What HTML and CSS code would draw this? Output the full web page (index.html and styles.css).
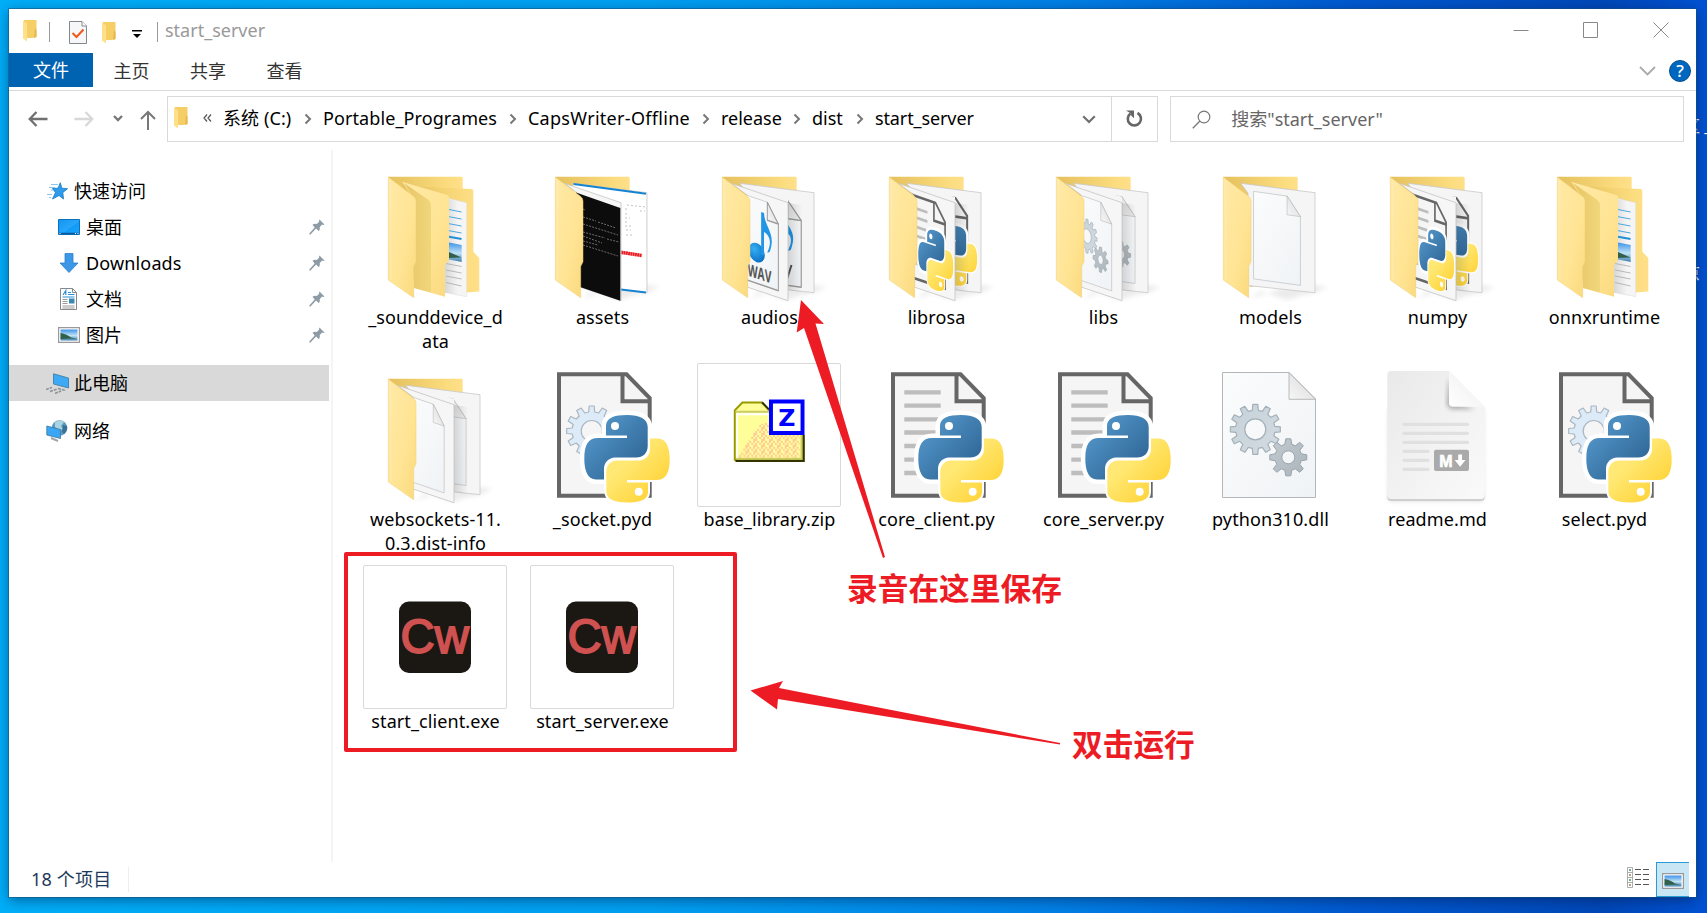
FILE: index.html
```html
<!DOCTYPE html>
<html lang="zh-CN">
<head>
<meta charset="utf-8">
<title>start_server</title>
<link rel="stylesheet" href="styles.css">
</head>
<body>
<svg class="defs" width="0" height="0" aria-hidden="true">
  <defs>
    <linearGradient id="gCover" x1="0" y1="0" x2="1" y2="1"><stop offset="0" stop-color="#ffe9a6"/><stop offset=".6" stop-color="#ffe494"/><stop offset="1" stop-color="#fbd97c"/></linearGradient>
    <linearGradient id="gBack" x1="0" y1="0" x2="1" y2="0"><stop offset="0" stop-color="#e5c05d"/><stop offset=".8" stop-color="#fbdc7e"/><stop offset="1" stop-color="#ffe08a"/></linearGradient>
    <linearGradient id="gInner" x1="0" y1="0" x2="1" y2="0"><stop offset="0" stop-color="#e6c665"/><stop offset="1" stop-color="#f1d67c"/></linearGradient>
    <linearGradient id="gShade" x1="0" y1="0" x2="1" y2="0"><stop offset="0" stop-color="#000" stop-opacity=".14"/><stop offset="1" stop-color="#000" stop-opacity="0"/></linearGradient>
    <linearGradient id="gBlue" x1="0" y1="0" x2="1" y2="1"><stop offset="0" stop-color="#5a9fd4"/><stop offset="1" stop-color="#275c8a"/></linearGradient>
    <linearGradient id="gYel" x1="0" y1="0" x2="1" y2="1"><stop offset=".35" stop-color="#ffe873"/><stop offset=".8" stop-color="#ffd43b"/></linearGradient>
    <linearGradient id="gDoc" x1="0" y1="0" x2="1" y2="1"><stop offset="0" stop-color="#fbfcfc"/><stop offset="1" stop-color="#f0f3f6"/></linearGradient>
    <linearGradient id="gFold" x1="0" y1="1" x2="1" y2="0"><stop offset="0" stop-color="#f6f6f6"/><stop offset="1" stop-color="#d8d8d8"/></linearGradient>
    <linearGradient id="gGear" x1="0" y1="0" x2="1" y2="1"><stop offset="0" stop-color="#c6d1d9"/><stop offset="1" stop-color="#d3dbe1"/></linearGradient>
    <linearGradient id="gGear2" x1="0" y1="0" x2="1" y2="1"><stop offset="0" stop-color="#c3cbd0"/><stop offset="1" stop-color="#aab4ba"/></linearGradient>
    <linearGradient id="gMd" x1="0" y1="0" x2="1" y2="1"><stop offset="0" stop-color="#e9e9e9"/><stop offset="1" stop-color="#fafafa"/></linearGradient>
    <linearGradient id="gMdFold" x1="0" y1="1" x2=".6" y2=".4"><stop offset="0" stop-color="#ffffff"/><stop offset="1" stop-color="#f4f4f4"/></linearGradient>
    <linearGradient id="gSky" x1="0" y1="0" x2="0" y2="1"><stop offset="0" stop-color="#3f93e6"/><stop offset=".55" stop-color="#bfe2f7"/><stop offset="1" stop-color="#3c7fae"/></linearGradient>
    <linearGradient id="gScreen" x1="0" y1="0" x2="1" y2="1"><stop offset="0" stop-color="#1296ee"/><stop offset=".55" stop-color="#27a6fb"/><stop offset=".56" stop-color="#0f9bf7"/><stop offset="1" stop-color="#1ba4ff"/></linearGradient>
    <radialGradient id="gNote" cx=".35" cy=".35" r=".8"><stop offset="0" stop-color="#35b0f5"/><stop offset="1" stop-color="#0568bd"/></radialGradient>
    <filter id="blur3"><feGaussianBlur stdDeviation="2.4"/></filter>
    <pattern id="dither" width="8" height="6" patternUnits="userSpaceOnUse"><path fill="#ffcc99" d="M0 0h2v2h-2zM4 0h2v2h-2zM2 2h2v2h-2zM6 2h2v2h-2zM0 4h4v2h-4z"/></pattern>
    <clipPath id="cFront"><path d="M34.300 22.300L91 41.700V139.700L50 126V34z"/></clipPath>
    <clipPath id="cRear"><path d="M42.700 22.300L117 31.700V131.700L91 129V36z"/></clipPath>
  </defs>

  <symbol id="gear12" viewBox="-26 -26 52 52">
    <path fill-rule="evenodd" stroke-width="1.200" stroke-linejoin="round" d="M-3-19L-2.500-25H2.500L3-19L7-18L10.500-23L15-20.500L12.500-15L15.500-12L21-14.500L23.500-10L18.500-6.500L19.500-3L25-2.500V2.500L19.500 3L18.500 6.500L23.500 10L21 14.500L15.500 12L12.500 15L15 20.500L10.500 23L7 18L3 19L2.500 25H-2.500L-3 19L-7 18L-10.500 23L-15 20.500L-12.500 15L-15.500 12L-21 14.500L-23.500 10L-18.500 6.500L-19.500 3L-25 2.500V-2.500L-19.500-3L-18.500-6.500L-23.500-10L-21-14.500L-15.500-12L-12.500-15L-15-20.500L-10.500-23L-7-18zM10.500 0A10.500 10.500 0 1 0-10.500 0A10.500 10.500 0 1 0 10.500 0z"/>
  </symbol>
  <symbol id="gear8" viewBox="-20 -20 40 40">
    <path fill-rule="evenodd" stroke-width="1" stroke-linejoin="round" d="M-3.500-13L-2.500-18.500H2.500L3.500-13L7-11.500L11.500-15L15-11.500L11.500-7L13-3.500L18.500-2.500V2.500L13 3.500L11.500 7L15 11.500L11.500 15L7 11.500L3.500 13L2.500 18.500H-2.500L-3.500 13L-7 11.500L-11.500 15L-15 11.500L-11.500 7L-13 3.500L-18.500 2.500V-2.500L-13-3.500L-11.500-7L-15-11.500L-11.500-15L-7-11.500zM6.500 0A6.500 6.500 0 1 0-6.500 0A6.500 6.500 0 1 0 6.500 0z"/>
  </symbol>

  <symbol id="snake" viewBox="0 0 144 144">
    <g fill="#fff" stroke="#fff" stroke-width="9" stroke-linejoin="round">
      <path d="M76 63C76 55 84 52 97 52C110 52 117.700 56 117.700 64V83C117.700 90 113 94.500 106 94.500H85C79 95 74 99 74 106V116.500H66C58 116.500 54.300 108 54.300 96C54.300 82 58 75 68 75H97V72.500H76z"/>
    </g>
    <path fill="#fff" stroke="#fff" stroke-width="4" d="M118 129C118 137 110 139.500 97 139.500C84 139.500 76.300 136 76.300 128V109C76.300 102 81 97.500 88 97.500H109C115 97 120 93 120 86V75.500H128C136 75.500 139.700 84 139.700 96C139.700 110 136 117 126 117H97V119.500H118z"/>
    <path fill="url(#gBlue)" d="M76 63C76 55 84 52 97 52C110 52 117.700 56 117.700 64V83C117.700 90 113 94.500 106 94.500H85C79 95 74 99 74 106V116.500H66C58 116.500 54.300 108 54.300 96C54.300 82 58 75 68 75H97V72.500H76z"/>
    <path fill="url(#gYel)" d="M118 129C118 137 110 139.500 97 139.500C84 139.500 76.300 136 76.300 128V109C76.300 102 81 97.500 88 97.500H109C115 97 120 93 120 86V75.500H128C136 75.500 139.700 84 139.700 96C139.700 110 136 117 126 117H97V119.500H118z"/>
    <circle cx="85" cy="63" r="4" fill="#fff"/><circle cx="108.700" cy="128.700" r="4" fill="#fff"/>
  </symbol>
  <symbol id="docDark" viewBox="0 0 144 144">
    <path fill="#f5f5f5" stroke="#666" stroke-width="4" d="M29 11.300H96.500L119.700 35V132.700H29z"/>
    <path fill="none" stroke="#666" stroke-width="4" d="M92.500 11V38.300H121"/>
  </symbol>
  <symbol id="py" viewBox="0 0 144 144">
    <use href="#docDark"/>
    <path stroke="#bdbdbd" stroke-width="4.300" d="M40.300 29.300H76.700M40.300 42.700H76.700M40.300 56.300H76.700M40.300 69.500H76.700M40.300 83H76.700M40.300 96.700H76.700M40.300 110H76.700"/>
    <use href="#snake"/>
  </symbol>
  <symbol id="pyd" viewBox="0 0 144 144">
    <use href="#docDark"/>
    <use href="#gear12" x="35.700" y="42" width="52" height="52" fill="#dcebf7" stroke="#aab6c0"/>
    <use href="#snake"/>
  </symbol>
  <symbol id="docLight" viewBox="0 0 144 144">
    <path fill="url(#gDoc)" stroke="#b4b7b9" d="M24.500 9.500H91L117.500 36V134.500H24.500z"/>
    <path fill="url(#gFold)" stroke="#a9abad" stroke-width=".8" d="M91 9.500V36.300H117.500z"/>
  </symbol>
  <symbol id="dll" viewBox="0 0 144 144">
    <use href="#docLight"/>
    <use href="#gear12" x="31.300" y="40.300" width="52" height="52" fill="url(#gGear)" stroke="#a4b0b8"/>
    <use href="#gear8" x="70.300" y="74.300" width="40" height="40" fill="url(#gGear2)" stroke="#98a4ab"/>
  </symbol>
  <symbol id="wav" viewBox="0 0 144 144">
    <use href="#docLight"/>
    <path fill="none" stroke="#999" stroke-width="2" d="M91 9.500V36H118V134H24M91 9.500L118 36"/>
    <ellipse cx="65" cy="89" rx="20" ry="14" fill="url(#gNote)"/>
    <path fill="#2096e6" d="M76 90V27H83C84 48 112 50 98 79Q97 83 91 83C106 62 91 56 83 55V90z"/>
  </symbol>
  <symbol id="folderBack" viewBox="0 0 144 144">
    <path fill="#000" opacity=".08" filter="url(#blur3)" d="M52 138L62 130L90 139L104 134L116 132L130 126L100 122z"/>
    <path fill="url(#gBack)" d="M25.300 15.700H98.500Q99.700 15.700 99.700 17V120L52 126z"/>
  </symbol>
  <symbol id="folderCover" viewBox="0 0 144 144">
    <path fill="url(#gCover)" stroke="#f0cf74" stroke-width=".5" d="M25.300 16L51 35.700Q53 37.500 53 40V100.700L50.700 105.500V136.800L25.300 119z"/>
    <path stroke="#fff2c4" stroke-width=".7" d="M27.800 19V119.500" opacity=".7"/>
  </symbol>
  <symbol id="rearPage" viewBox="0 0 144 144"><path fill="#f5f5f5" stroke="#c8c8c8" stroke-width=".8" d="M42.700 22.300L117 31.700V131.700L50 124.500V32z"/></symbol>
  <symbol id="frontPage" viewBox="0 0 144 144"><path fill="#f6f6f6" stroke="#c4c4c4" stroke-width=".8" d="M34.300 22.300L91 41.700V139.700L50 126V34z"/></symbol>
  <symbol id="shadeRear" viewBox="0 0 144 144"><path fill="url(#gShade)" d="M91 42L105 44V131L91 129z"/></symbol>

  <symbol id="fFolders" viewBox="0 0 144 144">
    <path fill="url(#gBack)" d="M25.300 15.700H98.500Q99.700 15.700 99.700 17V120L52 126z"/>
    <path fill="url(#gBack)" d="M39 20.700L57 25.700L108.700 28Q110.300 28 110.300 30V90.700L116.300 97V130.500L103 131.500L60 126z"/>
    <path fill="#f5f5f5" stroke="#ddd" stroke-width=".5" d="M84 37L103.700 41.700V135.700L80 131z"/>
    <path fill="url(#gShade)" d="M85 38L95 40V134L80 131z"/>
    <path stroke="#4aa8dd" d="M86 48.500L98.500 51M86 55.700L98.500 58M86 62.700L98.500 65M86 69.700L98.500 72"/>
    <path stroke="#2190d6" stroke-width="2" d="M86 75.800L98.500 78"/>
    <path fill="url(#gSky)" d="M86 81.500L98.700 84V101L86 98.500z"/>
    <path fill="#315f4a" d="M86 91L98.500 96.500L86 97z"/>
    <path stroke="#aaa" stroke-width=".8" d="M83 102.500L98.500 105.500M83 109L98.500 112M83 115L98.500 118M83 121.500L98.500 125"/>
    <path fill="url(#gCover)" d="M39 20.700L84.300 34Q86 34.700 86 36.300V99L82 104V135.700L51 127V38z"/>
    <path fill="url(#gInner)" d="M41 22L65.500 39Q68 41 68 45V131.500L51 127V38z"/>
    <use href="#folderCover"/>
  </symbol>
  <symbol id="fAssets" viewBox="0 0 144 144">
    <use href="#folderBack"/><use href="#rearPage"/>
    <path fill="#fff" d="M43 23L116 32V131L50 124z"/>
    <path stroke="#1683d0" stroke-width="2" fill="none" d="M43.500 23L116 32.700M91 128.500L116 131.500"/>
    <path stroke="#bbb" stroke-width=".9" stroke-dasharray="2 2" d="M97 44L116 46M95 48H98M110 50H115M95 53H99M95 57H100M95 61H99M95 65H103M96 69H101M96 74H102"/>
    <path stroke="#ed1c24" stroke-width="3.500" stroke-dasharray="2 .300" d="M89 91L112 94.500"/>
    <use href="#frontPage"/>
    <path fill="#0c0c0c" d="M46 31.500L90.300 47V139.700L50 126z"/>
    <path stroke="#777" stroke-width=".9" stroke-dasharray="2 1.200" d="M53 48L55 49M53 56L66 60M68 61L86 67M53 63L88 74M53 71L75 77M77 78L89 81M53 75L72 82M53 80L68 84M53 84L88 95"/>
    <use href="#folderCover"/>
  </symbol>
  <symbol id="fPy" viewBox="0 0 144 144">
    <use href="#folderBack"/><use href="#rearPage"/>
    <g clip-path="url(#cRear)"><use href="#py" width="144" height="144" transform="matrix(.5 .07 0 .68 43.300 22.800)"/></g>
    <use href="#shadeRear"/><use href="#frontPage"/>
    <g clip-path="url(#cFront)"><use href="#py" width="144" height="144" transform="matrix(.41 .14 0 .68 32 20.700)"/></g>
    <use href="#folderCover"/>
  </symbol>
  <symbol id="fDll" viewBox="0 0 144 144">
    <use href="#folderBack"/><use href="#rearPage"/>
    <g clip-path="url(#cRear)"><use href="#dll" width="144" height="144" transform="matrix(.5 .07 0 .68 45.300 22.800)"/></g>
    <use href="#shadeRear"/><use href="#frontPage"/>
    <g clip-path="url(#cFront)"><use href="#dll" width="144" height="144" transform="matrix(.41 .14 0 .68 32.500 22)"/></g>
    <use href="#folderCover"/>
  </symbol>
  <symbol id="fDocs" viewBox="0 0 144 144">
    <use href="#folderBack"/><use href="#rearPage"/>
    <g clip-path="url(#cRear)"><use href="#docLight" width="144" height="144" transform="matrix(.5 .07 0 .68 44.300 22.800)"/></g>
    <use href="#shadeRear"/><use href="#frontPage"/>
    <g clip-path="url(#cFront)"><use href="#docLight" width="144" height="144" transform="matrix(.41 .14 0 .68 33 22)"/></g>
    <use href="#folderCover"/>
  </symbol>
  <symbol id="fDoc" viewBox="0 0 144 144">
    <use href="#folderBack"/><use href="#rearPage"/>
    <use href="#docLight" width="144" height="144" transform="matrix(.504 .07 0 .7 43.200 22)"/>
    <use href="#folderCover"/>
  </symbol>

  <symbol id="pin" viewBox="0 0 16 16"><path fill="#8d9ba5" d="M10.500.5L15.500 5.500Q14 6.300 13 5.500L10.700 8.200Q11.300 10.500 10 12.300L7 9.600L1.500 15.500L.3 15.500L.5 14.300L5.700 8.500L3.500 5.700Q5.500 4.500 7.800 5L10.300 2.500Q9.700 1.500 10.500.5z"/></symbol>
  <symbol id="mini" viewBox="0 0 16 22">
    <path fill="#f5ce66" d="M2 0H14.500V17L10 18H2z"/><path fill="#e6b84f" d="M13 8L14.500 10V17L12 18z"/>
    <path fill="#ffe08a" d="M1 .5L5 3.500V21.500L1 18.500z"/>
  </symbol>
  <symbol id="photo" viewBox="0 0 22 16">
    <path fill="#fff" stroke="#999" stroke-width="1.200" d="M.6.6H21.400V15.400H.6z"/>
    <path fill="url(#gSky)" d="M2.500 2.500H19.500V13.500H2.500z"/><path fill="#315f4a" d="M2.500 6Q9 7 13 10.500L19 11.500L2.500 12z"/>
  </symbol>
  <symbol id="crumb" viewBox="0 0 8 12"><path fill="none" stroke="#777" stroke-width="2" d="M1.500 1.500L6 6L1.500 10.500"/></symbol>
</svg>

<div class="desktop-text upper">区 _</div>
<div class="desktop-text lower">京</div>

<main class="window">
  <header class="titlebar">
    <svg class="mini" width="16" height="22"><use href="#mini"/></svg>
    <i class="bar b1"></i>
    <svg class="check" width="18" height="23" viewBox="0 0 18 23"><path fill="#f6f7f8" stroke="#84888c" d="M.5.500H13L17.500 5V22.500H.5z"/><path fill="#fff" stroke="#84888c" d="M13 .5V5H17.500"/><path fill="none" stroke="#f0581a" stroke-width="2" d="M3.500 12L7.500 16L14.500 8.500"/></svg>
    <svg class="mini m2" width="16" height="22"><use href="#mini"/></svg>
    <svg class="drop" width="10" height="10" viewBox="0 0 10 10"><path d="M0 1H10V2.500H0zM1 5H9L5 9z"/></svg>
    <i class="bar b2"></i>
    <span class="title">start_server</span>
    <div class="controls">
      <svg width="16" height="18" viewBox="0 0 16 18"><path stroke="#888" d="M.5 9.500H15.500"/></svg>
      <svg width="16" height="18" viewBox="0 0 16 18"><path fill="none" stroke="#888" d="M.5 1.500H14.500V16.500H.5z"/></svg>
      <svg width="16" height="18" viewBox="0 0 16 18"><path stroke="#888" d="M.5 1.500L15.500 16.500M15.500 1.500L.5 16.500"/></svg>
    </div>
  </header>

  <nav class="ribbon">
    <span class="file">文件</span><span class="tab">主页</span><span class="tab">共享</span><span class="tab">查看</span>
    <div class="ribbon-end">
      <svg width="17" height="10" viewBox="0 0 17 10"><path fill="none" stroke="#aaa" stroke-width="1.800" d="M1 1L8.500 8.500L16 1"/></svg>
      <span class="help">?</span>
    </div>
  </nav>

  <div class="toolbar">
    <div class="arrows">
      <svg class="a1" width="20" height="16" viewBox="0 0 20 16"><path fill="none" stroke="#707070" stroke-width="2.300" d="M19.500 8H2M8.500 1L1.700 8L8.500 15"/></svg>
      <svg class="a2" width="20" height="16" viewBox="0 0 20 16"><path fill="none" stroke="#d8d8d8" stroke-width="2.300" d="M.5 8H18M11.500 1L18.300 8L11.500 15"/></svg>
      <svg class="a3" width="10" height="7" viewBox="0 0 10 7"><path fill="none" stroke="#777" stroke-width="2.300" d="M1 1L5 5L9 1"/></svg>
      <svg class="a4" width="16" height="20" viewBox="0 0 16 20"><path fill="none" stroke="#777" stroke-width="2" d="M8 20V2M1 9L8 2L15 9"/></svg>
    </div>
    <div class="address">
      <svg class="amini" width="16" height="22"><use href="#mini"/></svg>
      <svg class="more" width="9" height="8" viewBox="0 0 9 8"><path fill="none" stroke="#555" stroke-width="1.200" d="M4 .5L1 4L4 7.500M8 .5L5 4L8 7.500"/></svg>
      <span class="c c1">系统 (C:)</span><svg width="8" height="12"><use href="#crumb"/></svg>
      <span class="c c2">Portable_Programes</span><svg width="8" height="12"><use href="#crumb"/></svg>
      <span class="c c3">CapsWriter-Offline</span><svg width="8" height="12"><use href="#crumb"/></svg>
      <span class="c c4">release</span><svg width="8" height="12"><use href="#crumb"/></svg>
      <span class="c c5">dist</span><svg width="8" height="12"><use href="#crumb"/></svg>
      <span class="c c6">start_server</span>
      <svg class="history" width="14" height="9" viewBox="0 0 14 9"><path fill="none" stroke="#707070" stroke-width="2.200" d="M1.200 1.200L7 7L12.800 1.200"/></svg>
      <div class="refresh"><svg width="17" height="18" viewBox="0 0 17 18"><path fill="none" stroke="#666" stroke-width="2.600" d="M11.500 3A6.600 6.600 0 1 1 4.500 3.500"/><path fill="#666" d="M0 .5H8V8.300L5.500 6L4.500 3.300z"/></svg></div>
    </div>
    <div class="search">
      <svg width="19" height="19" viewBox="0 0 19 19"><circle cx="12" cy="7" r="5.800" fill="none" stroke="#777" stroke-width="1.200"/><path stroke="#777" stroke-width="1.300" d="M7.700 11.200L.8 18.200"/></svg>
      <span>搜索"start_server"</span>
    </div>
  </div>

  <div class="body">
    <aside class="sidebar">
      <div class="side top"><svg width="22" height="18" viewBox="0 0 22 18"><path stroke="#8cc8ee" stroke-width="1.100" d="M5 2.500H12M3 5.500H9M5 8H7M1 12.500H6M3 15.500H5"/><path fill="#2d9cea" stroke="#1478c3" stroke-width=".8" d="M14.300.7L15.800 6.200L21.500 6.700L16.800 10.500L17.500 17L13 13.500L6.500 17L9.500 10.500L6.500 6.500L12 6.200z"/></svg><span>快速访问</span></div>
      <div class="side sub"><svg width="22" height="16" viewBox="0 0 22 16"><path fill="url(#gScreen)" stroke="#0c72bd" d="M.5.500H21.500V15.500H.5z"/><path stroke="#075a9e" stroke-width="1.500" d="M1 14.500H21"/><path stroke="#fff" d="M1.500 14.500H2.500M17 14.500H18M19.500 14.500H20.500"/></svg><span>桌面</span><svg class="pin" width="16" height="16"><use href="#pin"/></svg></div>
      <div class="side sub"><svg width="22" height="20" viewBox="0 0 22 20"><path fill="#3c97e6" stroke="#2b7fcb" stroke-width=".8" d="M7 .5H15V10H20L11 19.500L2 10H7z"/></svg><span class="dl">Downloads</span><svg class="pin" width="16" height="16"><use href="#pin"/></svg></div>
      <div class="side sub"><svg width="22" height="22" viewBox="0 0 22 22"><path fill="#fff" stroke="#85898c" d="M2.500.5H14.500L18.500 4.500V21.500H2.500z"/><path fill="none" stroke="#85898c" d="M14.500.5V4.500H18.500"/><path fill="none" stroke="#2b90d9" stroke-width="1.200" d="M5 7L7.800 2.500V7M10 4.500H13M10 6.500H16.500M4.500 9H16.500"/><path stroke="#999" d="M4.500 11.500H9.500M4.500 13.500H9.500M4.500 15.500H9.500M4.500 18H16.500M4.500 20H16.500"/><path fill="#3a89b4" d="M11 10.500H16.500V15.500H11z"/></svg><span>文档</span><svg class="pin" width="16" height="16"><use href="#pin"/></svg></div>
      <div class="side sub"><svg width="22" height="16"><use href="#photo"/></svg><span>图片</span><svg class="pin" width="16" height="16"><use href="#pin"/></svg></div>
      <div class="side pc"><svg width="23" height="21" viewBox="0 0 23 21"><path fill="#3eaaf6" stroke="#3b789e" stroke-width=".8" d="M7.500.8L22.500 5V15L7.500 11z"/><path stroke="#8a9299" stroke-width="1.600" stroke-dasharray="3 1" d="M0 16.500L6 14.500M4 18.500L11 16M9 20.500L15 18M12 15.500L20 17.500"/></svg><span>此电脑</span></div>
      <div class="side net"><svg width="22" height="22" viewBox="0 0 22 22"><circle cx="13.500" cy="8" r="7.800" fill="#5c9bbd"/><path fill="#a9d2e2" d="M9 2Q14-1 18 2L15 6L17 9L13 11L9 7z"/><path fill="#3b7195" d="M17 5L21 6Q22 10 18 14L16 12z"/><path fill="#3aa6f5" stroke="#3b789e" stroke-width=".8" d="M.8 6L14.500 9.500V18.500L.8 15z"/><path stroke="#a0a6aa" stroke-width="2" d="M5 18L12 21"/></svg><span>网络</span></div>
    </aside>

    <section class="files">
      <div class="item"><svg class="pic"><use href="#fFolders"/></svg><p>_sounddevice_d<br>ata</p></div>
      <div class="item"><svg class="pic"><use href="#fAssets"/></svg><p>assets</p></div>
      <div class="item">
        <svg class="pic" viewBox="0 0 144 144">
          <use href="#folderBack"/><use href="#rearPage"/>
          <g clip-path="url(#cRear)"><use href="#wav" width="144" height="144" transform="matrix(.5 .07 0 .68 45.300 26.800)"/>
            <path fill="none" stroke="#555" stroke-width="2" d="M88 104L91 115L94.500 104"/></g>
          <use href="#shadeRear"/><use href="#frontPage"/>
          <g clip-path="url(#cFront)"><use href="#wav" width="144" height="144" transform="matrix(.41 .14 0 .68 33 22)"/></g>
          <text x="72" y="127" text-anchor="middle" class="wav-text" transform="matrix(.41 .14 0 .68 33 22)">WAV</text>
          <use href="#folderCover"/>
        </svg><p>audios</p></div>
      <div class="item"><svg class="pic"><use href="#fPy"/></svg><p>librosa</p></div>
      <div class="item"><svg class="pic"><use href="#fDll"/></svg><p>libs</p></div>
      <div class="item"><svg class="pic"><use href="#fDoc"/></svg><p>models</p></div>
      <div class="item"><svg class="pic"><use href="#fPy"/></svg><p>numpy</p></div>
      <div class="item"><svg class="pic"><use href="#fFolders"/></svg><p>onnxruntime</p></div>

      <div class="item"><svg class="pic"><use href="#fDocs"/></svg><p>websockets-11.<br>0.3.dist-info</p></div>
      <div class="item"><svg class="pic"><use href="#pyd"/></svg><p>_socket.pyd</p></div>
      <div class="item">
        <svg class="pic framed" viewBox="0 0 144 144">
          <path fill="#ffff99" stroke="#999900" stroke-width="2" d="M37.300 97V47L45 39H65L72 47H106V97z"/>
          <path stroke="#cccc66" stroke-width="2" d="M38 48.500H73M39 96H106M105 72V97"/>
          <path stroke="#fff" stroke-width="2" d="M40 51H72M39.500 50V95"/>
          <path fill="url(#dither)" d="M62 62L72 58V72H103V95H40L48 82z"/>
          <path stroke="#333300" stroke-width="2" fill="none" d="M65 39L72 46M38 98.300H107.300V72"/>
          <path fill="#fff" stroke="#00f" stroke-width="4" d="M74 38H106V70H74z"/>
          <text x="90" y="62.500" text-anchor="middle" class="zip-text">Z</text>
        </svg><p>base_library.zip</p></div>
      <div class="item"><svg class="pic"><use href="#py"/></svg><p>core_client.py</p></div>
      <div class="item"><svg class="pic"><use href="#py"/></svg><p>core_server.py</p></div>
      <div class="item"><svg class="pic"><use href="#dll"/></svg><p>python310.dll</p></div>
      <div class="item">
        <svg class="pic" viewBox="0 0 144 144">
          <path fill="#b5b5b5" filter="url(#blur3)" opacity=".6" d="M24 46H118V137.500H24z"/>
          <path fill="#cfcfcf" d="M22.300 132V134Q22.300 138 26 138H116Q119.700 138 119.700 134V130z"/>
          <path fill="url(#gMd)" d="M26 8H84L119.700 43.700V132Q119.700 136 116 136H26Q22.300 136 22.300 132V12Q22.300 8 26 8z"/>
          <path filter="url(#blur3)" fill="#777" opacity=".6" d="M84 14L82 42L86 46H110L90 38z"/>
          <path fill="url(#gMdFold)" d="M84 8V40Q84 43.700 88 43.700H119.700z"/>
          <path stroke="#e0e0e0" stroke-width="3.300" stroke-linecap="round" d="M39 61.300H102.500M39 70.300H102.500M39 79.300H102.500M39 88.300H63M39 97.300H63M39 106.300H63"/>
          <rect x="69" y="86.700" width="35" height="21.300" rx="2" fill="#aaa"/>
          <text x="81" y="103.500" text-anchor="middle" class="md-text">M</text>
          <path fill="#fff" d="M93.200 91.500H97V97H100.500L95.100 103.800L89.700 97H93.200z"/>
        </svg><p>readme.md</p></div>
      <div class="item"><svg class="pic"><use href="#pyd"/></svg><p>select.pyd</p></div>

      <div class="item"><svg class="pic framed" viewBox="0 0 144 144"><rect x="35.500" y="36" width="73" height="72.500" rx="10" fill="#1b1713"/><text x="71.700" y="88.500" text-anchor="middle" class="cw-text">Cw</text></svg><p>start_client.exe</p></div>
      <div class="item"><svg class="pic framed" viewBox="0 0 144 144"><rect x="35.500" y="36" width="73" height="72.500" rx="10" fill="#1b1713"/><text x="71.700" y="88.500" text-anchor="middle" class="cw-text">Cw</text></svg><p>start_server.exe</p></div>
    </section>
  </div>

  <footer class="status">
    <span class="count">18 个项目</span>
    <div class="views">
      <svg width="22" height="21" viewBox="0 0 22 21"><path fill="#fff" stroke="#999" stroke-width=".8" d="M.5.5H5.500V20.500H.5zM.5 5.500H5.500M.5 10.500H5.500M.5 15.500H5.500"/><path stroke="#4b8d68" stroke-width="1.500" d="M2 3H4M2 13H4"/><path stroke="#a87858" stroke-width="1.500" d="M2 8H4M2 18H4"/><path stroke="#555" stroke-width="1.200" stroke-dasharray="6 2" d="M8 2.500H22M8 7.500H22M8 12.500H22M8 17.500H22"/></svg>
      <span class="large"><svg width="22" height="16"><use href="#photo"/></svg></span>
    </div>
  </footer>
</main>

<svg class="marks" width="1707" height="913" viewBox="0 0 1707 913">
  <path fill="none" stroke="#ed1c24" stroke-width="4" stroke-linejoin="round" d="M346 554H735V750H346z"/>
  <path fill="#ed1c24" d="M801 300L824 324L815.500 323.500L885 557L883 558L804 328L796.700 332.500z"/>
  <path fill="#ed1c24" d="M750.500 690.500L783 681L779 688L1060 743V744.500L778 699L777 709.500z"/>
</svg>
<div class="note n1">录音在这里保存</div>
<div class="note n2">双击运行</div>
</body>
</html>
```
FILE: styles.css
```css
* { box-sizing: border-box; }
body {
  margin: 0;
  width: 1707px;
  height: 913px;
  padding: 9px 11px 16px 9px;
  overflow: hidden;
  position: relative;
  font: 18px/24px "Noto Sans", "Noto Sans CJK SC", sans-serif;
  color: #000;
  background: linear-gradient(90deg, #00aef8 0, #00a0f2 38%, #0080e6 62%, #0058cf 80%, #0048b8 94%, #0052d4 100%);
}
svg { display: block; flex: none; }
.defs { position: absolute; }
.window {
  position: relative;
  width: 1687px;
  height: 888px;
  background: #fff;
  display: flex;
  flex-direction: column;
  box-shadow: 0 0 0 1px rgba(20, 80, 120, .5), 0 3px 12px rgba(0, 20, 60, .5);
}
.desktop-text { position: absolute; left: 1684px; color: #fff; font-size: 16px; white-space: nowrap; }
.upper { top: 114px; }
.lower { top: 261px; }

.titlebar { height: 44px; display: flex; align-items: flex-start; flex: none; padding: 11px 27px 0 13px; }
.bar { width: 1px; height: 20px; background: #999; margin-top: 2px; }
.b1 { margin-left: 11px; }
.check { margin: 1px 0 0 19px; }
.m2 { margin: 2px 0 0 14px; }
.drop { margin: 9px 0 0 15px; }
.b2 { margin-left: 15px; }
.title { color: #999; margin-left: 7px; margin-top: -2px; }
.controls { margin-left: auto; display: flex; gap: 54px; margin-top: 1px; }

.ribbon { height: 38px; flex: none; display: flex; border-bottom: 1px solid #d9d9d9; line-height: 36px; color: #333; }
.file { width: 84px; height: 34px; line-height: 34px; background: #0063b1; color: #fff; text-align: center; }
.tab { margin-left: 20.500px; width: 36px; margin-right: 20px; }
.ribbon-end { margin-left: auto; display: flex; align-items: center; gap: 13px; padding: 0 5px 2px 0; }
.help { width: 22px; height: 22px; border-radius: 50%; background: #0067c0; border: 1px solid #064e8c; color: #fff; line-height: 20px; text-align: center; font-size: 17px; font-weight: 500; }

.toolbar { height: 59px; flex: none; display: flex; padding: 5px 12px 0 19px; }
.arrows { width: 139px; display: flex; align-items: center; height: 46px; }
.a2 { margin-left: 26px; }
.a3 { margin-left: 19px; margin-top: -2px; }
.a4 { margin-left: 17px; margin-top: 1px; }
.address { width: 992px; height: 46px; border: 1px solid #d9d9d9; display: flex; align-items: center; white-space: nowrap; }
.amini { margin-left: 5px; margin-top: -2px; }
.more { margin: -3px 0 0 14px; }
.c { margin-right: 12px; margin-left: 11px; margin-top: -2px; }
.c1 { width: 69px; letter-spacing: .1px; }
.c2 { width: 174px; letter-spacing: .1px; }
.c3 { width: 162px; letter-spacing: .300px; }
.c4 { width: 60px; }
.c5 { width: 32px; }
.c6 { width: 98px; letter-spacing: -.1px; }
.history { margin-left: auto; margin-right: 15px; }
.refresh { width: 46px; height: 44px; border-left: 1px solid #d9d9d9; display: flex; align-items: center; justify-content: center; }
.search { margin-left: 12px; width: 514px; height: 46px; border: 1px solid #d9d9d9; display: flex; align-items: center; color: #666; gap: 20px; padding-left: 21px; }

.body { flex: 1; display: flex; min-height: 0; }
.sidebar { width: 324px; flex: none; border-right: 2px solid #f5f5f5; padding-top: 23px; }
.side { height: 36px; width: 320px; display: flex; align-items: center; gap: 6px; padding: 0 4px 0 49px; }
.top { padding-left: 37px; }
.pc { margin-top: 12px; background: #d9d9d9; padding-left: 37px; gap: 5px; }
.net { margin-top: 12px; padding-left: 37px; }
.dl { letter-spacing: .15px; }
.pin { margin-left: auto; }
.files {
  display: grid;
  grid-template-columns: repeat(8, 167px);
  grid-auto-rows: 202px;
  align-content: start;
  padding: 11px 0 0 18.500px;
}
.item { display: flex; flex-direction: column; align-items: center; }
.pic { width: 144px; height: 144px; }
.framed { border: 1px solid #d9d9d9; border-radius: 2px; }
.item p { margin: 0 0 0 1px; text-align: center; white-space: nowrap; letter-spacing: .1px; }

.status { height: 35px; flex: none; display: flex; color: #1e395b; }
.count { margin: 5px 0; padding: 0 17px 0 22px; border-right: 1px solid #eee; letter-spacing: .2px; }
.views { margin-left: auto; display: flex; align-items: flex-start; padding-right: 7px; gap: 7px; }
.views > svg { margin-top: 5px; }
.large { width: 33px; height: 35px; border: solid #2a9bd6; border-width: 1px 0 1px 1px; background: #c9e6f4; display: flex; align-items: center; justify-content: center; padding-top: 2px; }

.marks { position: absolute; left: 0; top: 0; }
.note { position: absolute; color: #ed1c24; font: bold 30.700px/40px "Noto Sans CJK SC", sans-serif; white-space: nowrap; }
.n1 { left: 847px; top: 567px; }
.n2 { left: 1072px; top: 723px; }

.cw-text { font: 48px "Liberation Sans", sans-serif; fill: #cf5150; stroke: #cf5150; stroke-width: 1.800px; }
.zip-text { font: bold 24px "DejaVu Sans", sans-serif; fill: #00f; }
.md-text { font: bold 16px "Liberation Sans", sans-serif; fill: #fff; stroke: #fff; stroke-width: .6px; }
.wav-text { font: bold 25px "Open Sans", sans-serif; fill: #555; }
```
